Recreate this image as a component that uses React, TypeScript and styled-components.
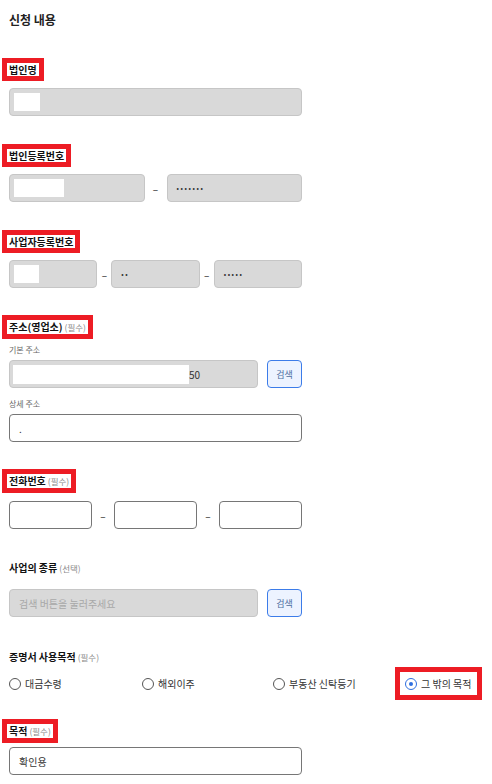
import styled, { createGlobalStyle } from 'styled-components';

const GlobalStyle = createGlobalStyle`
  html, body {
    margin: 0;
    padding: 0;
    background: #ffffff;
  }
  body {
    font-family: "Noto Sans CJK KR", "Noto Sans", sans-serif;
    color: #222;
  }
`;

const Page = styled.div`
  padding: 11px 0 4px 9px;
  width: 483px;
  box-sizing: border-box;
`;

const Title = styled.h2`
  margin: 0;
  font-size: 12px;
  line-height: 18px;
  font-weight: 700;
  color: #222;
`;

const Section = styled.section<{ $top: number }>`
  margin-top: ${(p) => p.$top}px;
  display: flex;
  flex-direction: column;
`;

const Label = styled.div<{ $mark?: boolean; $gap?: number }>`
  align-self: flex-start;
  font-size: 10px;
  line-height: 13px;
  font-weight: 700;
  color: #111;
  margin-bottom: ${(p) => p.$gap ?? 12}px;
  padding: 0 2px;
  margin-left: -2px;
  outline: ${(p) => (p.$mark ? '5px solid #ed1c24' : 'none')};
  outline-offset: 0;
`;

const Note = styled.span`
  font-size: 8.5px;
  font-weight: 400;
  color: #8a8a8a;
  margin-left: 2px;
`;

const SubLabel = styled.div`
  font-size: 8px;
  line-height: 11px;
  color: #666;
  margin-bottom: 5px;
`;

const Row = styled.div<{ $after?: number }>`
  display: flex;
  align-items: center;
  width: 293px;
  margin-bottom: ${(p) => p.$after ?? 0}px;
`;

const Field = styled.div<{ $disabled?: boolean }>`
  box-sizing: border-box;
  height: 28px;
  flex: 1;
  border-radius: 4px;
  border: 1px solid ${(p) => (p.$disabled ? '#c6c6c6' : '#767676')};
  background: ${(p) => (p.$disabled ? '#d9d9d9' : '#ffffff')};
  display: flex;
  align-items: center;
  padding: 0 9px;
  font-size: 10px;
  color: #333;
  overflow: hidden;
  white-space: nowrap;
`;

const Redact = styled.span<{ $w: number; $h: number; $shift?: number }>`
  display: inline-block;
  width: ${(p) => p.$w}px;
  height: ${(p) => p.$h}px;
  background: #ffffff;
  margin-left: ${(p) => p.$shift ?? -5}px;
  flex: none;
`;

const Dots = styled.span`
  font-size: 7px;
  letter-spacing: 1.6px;
  color: #333;
`;

const Placeholder = styled.span`
  color: #a8a8a8;
  font-size: 10px;
`;

const Dash = styled.span<{ $w: number }>`
  width: ${(p) => p.$w}px;
  flex: none;
  text-align: center;
  font-size: 10px;
  color: #222;
`;

const SearchButton = styled.button`
  box-sizing: border-box;
  flex: none;
  width: 35px;
  height: 28px;
  margin-left: 9px;
  border: 1px solid #3c7ce9;
  border-radius: 4px;
  background: #edf3ff;
  color: #4c6d9e;
  font-family: inherit;
  font-size: 9px;
  padding: 0;
`;

const RadioGroup = styled.div`
  display: grid;
  grid-template-columns: 133px 131px 132px auto;
  margin-top: 13px;
`;

const Option = styled.label<{ $mark?: boolean }>`
  justify-self: start;
  display: inline-flex;
  align-items: center;
  gap: 4px;
  font-size: 10px;
  line-height: 13px;
  color: #333;
  outline: ${(p) => (p.$mark ? '5px solid #ed1c24' : 'none')};
  outline-offset: 5px;
  padding-right: 1px;
`;

const Circle = styled.span<{ $on?: boolean }>`
  box-sizing: border-box;
  width: 12px;
  height: 12px;
  border-radius: 50%;
  border: 1px solid ${(p) => (p.$on ? '#2f6fe0' : '#555')};
  display: inline-flex;
  align-items: center;
  justify-content: center;
  &::after {
    content: '';
    width: 4px;
    height: 4px;
    border-radius: 50%;
    background: ${(p) => (p.$on ? '#2f6fe0' : 'transparent')};
  }
`;

const purposes = ['대금수령', '해외이주', '부동산 신탁등기', '그 밖의 목적'];

export default function App() {
  return (
    <Page>
      <GlobalStyle />
      <Title>신청 내용</Title>

      <Section $top={34}>
        <Label $mark>법인명</Label>
        <Row>
          <Field $disabled>
            <Redact $w={26} $h={18} />
          </Field>
        </Row>
      </Section>

      <Section $top={33}>
        <Label $mark>법인등록번호</Label>
        <Row>
          <Field $disabled>
            <Redact $w={50} $h={18} />
          </Field>
          <Dash $w={22}>–</Dash>
          <Field $disabled>
            <Dots>•••••••</Dots>
          </Field>
        </Row>
      </Section>

      <Section $top={33}>
        <Label $mark>사업자등록번호</Label>
        <Row>
          <Field $disabled>
            <Redact $w={25} $h={18} />
          </Field>
          <Dash $w={14}>–</Dash>
          <Field $disabled>
            <Dots>••</Dots>
          </Field>
          <Dash $w={14}>–</Dash>
          <Field $disabled>
            <Dots>•••••</Dots>
          </Field>
        </Row>
      </Section>

      <Section $top={32}>
        <Label $mark $gap={10}>
          주소(영업소)<Note>(필수)</Note>
        </Label>
        <SubLabel>기본 주소</SubLabel>
        <Row $after={10}>
          <Field $disabled>
            <Redact $w={176} $h={19} $shift={-6} />
            <span>50</span>
          </Field>
          <SearchButton>검색</SearchButton>
        </Row>
        <SubLabel>상세 주소</SubLabel>
        <Row>
          <Field>.</Field>
        </Row>
      </Section>

      <Section $top={32}>
        <Label $mark $gap={13}>
          전화번호<Note>(필수)</Note>
        </Label>
        <Row>
          <Field />
          <Dash $w={22}>–</Dash>
          <Field />
          <Dash $w={22}>–</Dash>
          <Field />
        </Row>
      </Section>

      <Section $top={32}>
        <Label $gap={14}>
          사업의 종류<Note>(선택)</Note>
        </Label>
        <Row>
          <Field $disabled>
            <Placeholder>검색 버튼을 눌러주세요</Placeholder>
          </Field>
          <SearchButton>검색</SearchButton>
        </Row>
      </Section>

      <Section $top={33}>
        <Label $gap={0}>
          증명서 사용목적<Note>(필수)</Note>
        </Label>
        <RadioGroup>
          {purposes.map((p, i) => (
            <Option key={p} $mark={i === 3}>
              <Circle $on={i === 3} />
              {p}
            </Option>
          ))}
        </RadioGroup>
      </Section>

      <Section $top={34}>
        <Label $mark $gap={9}>
          목적<Note>(필수)</Note>
        </Label>
        <Row>
          <Field>확인용</Field>
        </Row>
      </Section>
    </Page>
  );
}
